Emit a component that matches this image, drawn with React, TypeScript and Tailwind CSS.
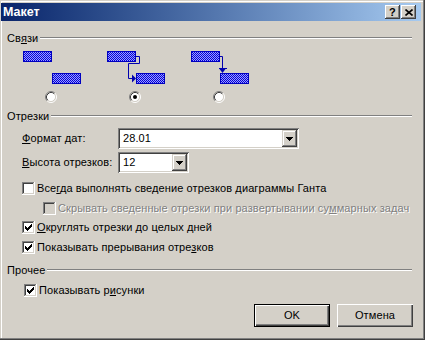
import React from "react";

const FACE = "#D4D0C8";

function Check({ checked = false, disabled = false }: { checked?: boolean; disabled?: boolean }) {
  const pts: [number, number][] = [
    [3, 5],
    [4, 6],
    [5, 7],
    [6, 6],
    [7, 5],
    [8, 4],
    [9, 3],
  ];
  return (
    <svg width="13" height="13" viewBox="0 0 13 13" className="block shrink-0">
      <rect x="0" y="0" width="12" height="1" fill="#808080" />
      <rect x="0" y="0" width="1" height="12" fill="#808080" />
      <rect x="0" y="12" width="13" height="1" fill="#ffffff" />
      <rect x="12" y="0" width="1" height="13" fill="#ffffff" />
      <rect x="1" y="1" width="10" height="1" fill="#404040" />
      <rect x="1" y="1" width="1" height="10" fill="#404040" />
      <rect x="1" y="11" width="11" height="1" fill={FACE} />
      <rect x="11" y="1" width="1" height="11" fill={FACE} />
      <rect x="2" y="2" width="9" height="9" fill={disabled ? FACE : "#ffffff"} />
      {checked &&
        pts.map(([x, y]) => <rect key={x} x={x} y={y} width="1" height="3" fill="#000000" />)}
    </svg>
  );
}

function Radio({ checked = false }: { checked?: boolean }) {
  return (
    <svg width="12" height="12" viewBox="0 0 12 12" className="block">
      <circle cx="6" cy="6" r="4.5" fill="#ffffff" />
      <path d="M2.11 9.89 A5.5 5.5 0 0 1 9.89 2.11" stroke="#808080" fill="none" />
      <path d="M9.89 2.11 A5.5 5.5 0 0 1 2.11 9.89" stroke="#ffffff" fill="none" />
      <path d="M2.82 9.18 A4.5 4.5 0 0 1 9.18 2.82" stroke="#404040" fill="none" />
      <path d="M9.18 2.82 A4.5 4.5 0 0 1 2.82 9.18" stroke={FACE} fill="none" />
      {checked && <circle cx="6" cy="6" r="2" fill="#000000" />}
    </svg>
  );
}

function Diagram({ kind, id }: { kind: number; id: string }) {
  const blue = "#0000B0";
  return (
    <svg width="62" height="36" viewBox="0 0 62 36" className="block">
      <defs>
        <pattern id={id} width="2" height="2" patternUnits="userSpaceOnUse">
          <rect width="2" height="2" fill="#9C9CFF" />
          <rect width="1" height="1" fill="#0000D8" />
          <rect x="1" y="1" width="1" height="1" fill="#0000D8" />
        </pattern>
      </defs>
      <rect x="1.5" y="1.5" width="28" height="10" fill={`url(#${id})`} stroke="#0000C0" />
      <rect x="30.5" y="23.5" width="28" height="10" fill={`url(#${id})`} stroke="#0000C0" />
      {kind === 1 && (
        <>
          <path d="M30 6.5 H33.5 V13.5 H22.5 V28.5 H27" stroke={blue} fill="none" />
          <polygon points="26,24.5 30,28.5 26,32.5" fill={blue} />
        </>
      )}
      {kind === 2 && (
        <>
          <path d="M30 6.5 H32.5 V19" stroke={blue} fill="none" />
          <rect x="29" y="18" width="8" height="1" fill={blue} />
          <polygon points="29.5,19 35.5,19 32.5,23" fill={blue} />
        </>
      )}
    </svg>
  );
}

function Arrow() {
  return (
    <svg width="7" height="4" viewBox="0 0 7 4" className="block">
      <rect x="0" y="0" width="7" height="1" fill="#000" />
      <rect x="1" y="1" width="5" height="1" fill="#000" />
      <rect x="2" y="2" width="3" height="1" fill="#000" />
      <rect x="3" y="3" width="1" height="1" fill="#000" />
    </svg>
  );
}

function Combo({ w, value }: { w: string; value: string }) {
  return (
    <div
      className={`${w} h-[21px] bg-white p-[2px] flex shadow-[inset_1px_1px_#808080,inset_-1px_-1px_#ffffff,inset_2px_2px_#404040,inset_-2px_-2px_#D4D0C8]`}
    >
      <div className="flex-1 pl-[3px] flex items-center leading-[13px]">{value}</div>
      <div className="w-[15px] h-full bg-[#D4D0C8] flex items-center justify-center shadow-[inset_-1px_-1px_#404040,inset_1px_1px_#D4D0C8,inset_-2px_-2px_#808080,inset_2px_2px_#ffffff]">
        <Arrow />
      </div>
    </div>
  );
}

function Group({ children }: { children: React.ReactNode }) {
  return (
    <div className="flex items-center h-[14px] pl-[7px] pr-[13px]">
      <span className="leading-[13px] pr-[2px]">{children}</span>
      <div className="flex-1 h-[2px] border-t border-b border-t-[#808080] border-b-white" />
    </div>
  );
}

function CheckRow({
  pl,
  checked,
  disabled,
  children,
}: {
  pl: string;
  checked?: boolean;
  disabled?: boolean;
  children: React.ReactNode;
}) {
  return (
    <div className={`flex items-center h-[13px] ${pl}`}>
      <Check checked={checked} disabled={disabled} />
      <span
        className={`ml-[2px] leading-[13px] whitespace-nowrap ${
          disabled ? "text-[#808080] [text-shadow:1px_1px_0_#ffffff]" : ""
        }`}
      >
        {children}
      </span>
    </div>
  );
}

const U = ({ children }: { children: React.ReactNode }) => <span className="underline">{children}</span>;

export default function App() {
  return (
    <div className="w-[425px] h-[340px] bg-[#D4D0C8] flex flex-col text-[11px] tracking-[0.1px] text-black font-['Liberation_Sans',Arial,sans-serif] shadow-[inset_-1px_-1px_#404040,inset_-2px_-2px_#808080,inset_1px_1px_#D4D0C8,inset_2px_2px_#ffffff] overflow-hidden">
      {/* Title bar */}
      <div className="mt-[3px] ml-[1px] mr-[4px] h-[18px] flex items-center justify-between pl-[2px] pr-[5px] bg-gradient-to-r from-[#0A246A] to-[#A6CAF0]">
        <span className="text-white font-bold text-[12.5px] tracking-normal leading-[14px]">Макет</span>
        <div className="flex gap-[1px]">
          <div className="w-[15px] h-[14px] bg-[#D4D0C8] flex items-center justify-center font-bold text-[11px] leading-[12px] shadow-[inset_-1px_-1px_#404040,inset_1px_1px_#ffffff,inset_-2px_-2px_#808080]">
            ?
          </div>
          <div className="w-[15px] h-[14px] bg-[#D4D0C8] flex items-center justify-center shadow-[inset_-1px_-1px_#404040,inset_1px_1px_#ffffff,inset_-2px_-2px_#808080]">
            <svg width="8" height="7" viewBox="0 0 8 7" className="block">
              <path d="M0.5 0.5 L7.5 6.5 M7.5 0.5 L0.5 6.5" stroke="#000" strokeWidth="1.6" />
            </svg>
          </div>
        </div>
      </div>

      {/* Связи */}
      <div className="mt-[10px]">
        <Group>
          Св<U>я</U>зи
        </Group>
      </div>
      <div className="mt-[5px] flex pl-[22px] gap-[22px]">
        {[0, 1, 2].map((k) => (
          <div key={k} className="flex flex-col w-[62px]">
            <Diagram kind={k} id={`chk${k}`} />
            <div className="mt-[5px] pl-[23px]">
              <Radio checked={k === 1} />
            </div>
          </div>
        ))}
      </div>

      {/* Отрезки */}
      <div className="mt-[6px]">
        <Group>Отрезки</Group>
      </div>
      <div className="mt-[5px] flex items-center">
        <span className="w-[118px] pl-[22px] leading-[13px]">
          <U>Ф</U>ормат дат:
        </span>
        <Combo w="w-[181px]" value="28.01" />
      </div>
      <div className="mt-[3px] flex items-center">
        <span className="w-[118px] pl-[22px] leading-[13px]">
          <U>В</U>ысота отрезков:
        </span>
        <Combo w="w-[71px]" value="12" />
      </div>
      <div className="mt-[9px]">
        <CheckRow pl="pl-[22px]">
          Все<U>г</U>да выполнять сведение отрезков диаграммы Ганта
        </CheckRow>
      </div>
      <div className="mt-[7px]">
        <CheckRow pl="pl-[43px]" disabled>
          Скрывать сведенные отрезки при развертывании су<U>м</U>марных задач
        </CheckRow>
      </div>
      <div className="mt-[6px]">
        <CheckRow pl="pl-[22px]" checked>
          <U>О</U>круглять отрезки до целых дней
        </CheckRow>
      </div>
      <div className="mt-[7px]">
        <CheckRow pl="pl-[22px]" checked>
          Показывать прерывания отре<U>з</U>ков
        </CheckRow>
      </div>

      {/* Прочее */}
      <div className="mt-[9px]">
        <Group>Прочее</Group>
      </div>
      <div className="mt-[7px]">
        <CheckRow pl="pl-[24px]" checked>
          Показывать р<U>и</U>сунки
        </CheckRow>
      </div>

      {/* Buttons */}
      <div className="mt-[7px] flex justify-end pr-[12px] gap-[7px]">
        <div className="w-[76px] h-[23px] border border-black bg-[#D4D0C8] flex items-center justify-center leading-[13px] shadow-[inset_1px_1px_#ffffff,inset_-1px_-1px_#404040,inset_-2px_-2px_#808080]">
          OK
        </div>
        <div className="w-[76px] h-[23px] bg-[#D4D0C8] flex items-center justify-center leading-[13px] shadow-[inset_1px_1px_#ffffff,inset_-1px_-1px_#404040,inset_-2px_-2px_#808080]">
          Отмена
        </div>
      </div>
    </div>
  );
}
